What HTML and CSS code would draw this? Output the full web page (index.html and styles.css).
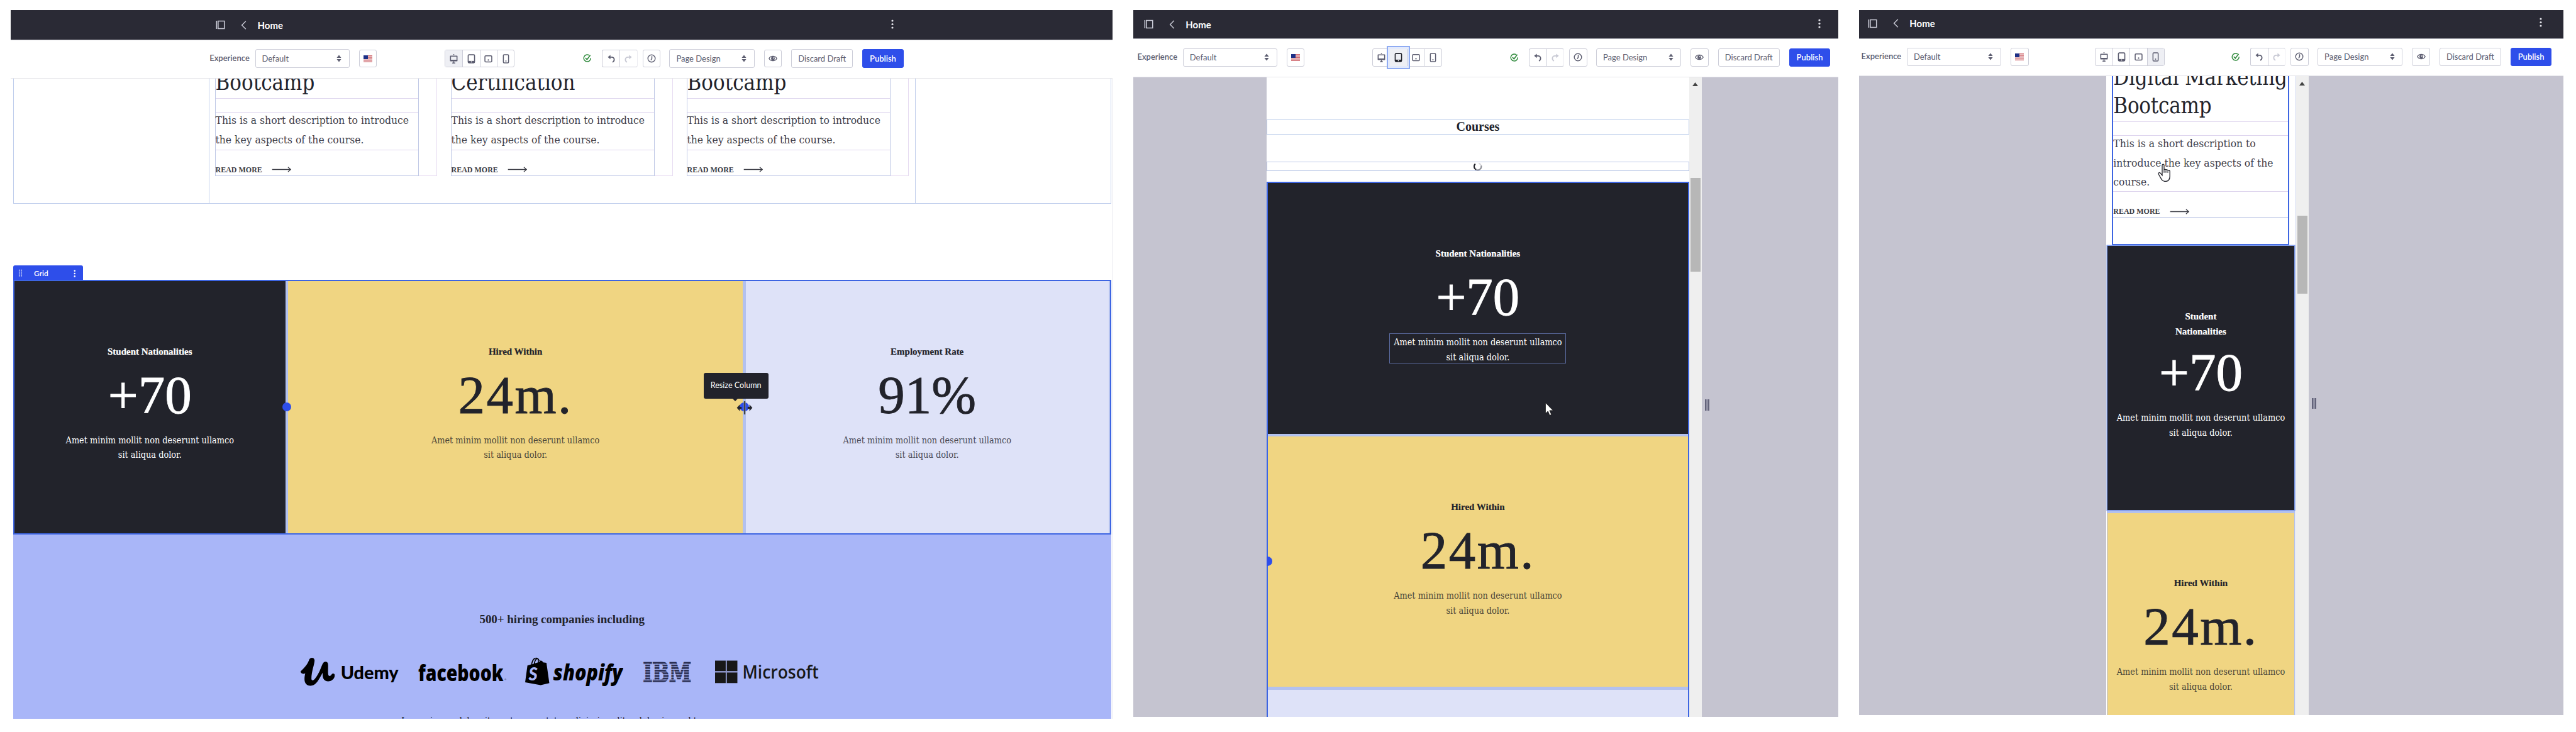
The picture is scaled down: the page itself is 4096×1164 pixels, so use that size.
FILE: index.html
```
<!DOCTYPE html>
<html lang="en">
<head>
<meta charset="utf-8">
<title>Home - Page Editor</title>
<link rel="stylesheet" href="styles.css">
</head>
<body>
<svg class="sprite" aria-hidden="true">
  <symbol id="i-panel" viewBox="0 0 16 16"><path d="M1.2 1v14M3.8 1.6h10.6v12.8H3.8z" fill="none" stroke="currentColor" stroke-width="1.7"/></symbol>
  <symbol id="i-back" viewBox="0 0 9 14"><path d="M7.8.8 1.6 7l6.2 6.2" fill="none" stroke="currentColor" stroke-width="1.4"/></symbol>
  <symbol id="i-dots" viewBox="0 0 4 15"><circle cx="2" cy="2" r="1.6"/><circle cx="2" cy="7.5" r="1.6"/><circle cx="2" cy="13" r="1.6"/></symbol>
  <symbol id="i-updown" viewBox="0 0 8 12"><path d="M4 .5 7.6 5H.4zM4 11.5.4 7h7.2z"/></symbol>
  <symbol id="i-flag" viewBox="0 0 14 11"><path fill="#f3dede" d="M0 0h14v11H0z"/><path fill="#d0686f" d="M0 0h14v1.3H0zM0 2.5h14v1.2H0zM0 5h14v1.2H0zM0 7.4h14v1.2H0zM0 9.8h14V11H0z"/><path fill="#1d2f86" d="M0 0h7v6H0z"/></symbol>
  <symbol id="i-desktop" viewBox="0 0 16 18"><path d="M2.5 4.5h11v8h-11zM2 11.4h12" fill="none" stroke="currentColor" stroke-width="1.7" stroke-linejoin="round"/><path d="M5.5 15.5h5v1.6h-5zM7.2 13h1.6v3H7.2zM7.2 1h1.6v1.6H7.2z"/></symbol>
  <symbol id="i-tablet" viewBox="0 0 16 18"><rect x="2.6" y="2.2" width="10.8" height="13.6" rx="1.4" fill="none" stroke="currentColor" stroke-width="1.7"/><path d="M2.6 12.6h10.8v3H2.6z"/><circle cx="8" cy="14.2" r=".9" fill="#fff"/></symbol>
  <symbol id="i-tabland" viewBox="0 0 16 18"><rect x="2.2" y="3.9" width="11.6" height="10.4" rx="1.4" fill="none" stroke="currentColor" stroke-width="1.6"/><circle cx="8" cy="11" r="1.2"/></symbol>
  <symbol id="i-phone" viewBox="0 0 16 18"><rect x="3.6" y="2" width="8.8" height="14" rx="1.4" fill="none" stroke="currentColor" stroke-width="1.6"/><circle cx="8" cy="12.8" r="1.1"/></symbol>
  <symbol id="i-check" viewBox="0 0 14 14"><path d="M10.2 2A5.7 5.7 0 1 0 12.7 6.5" fill="none" stroke="currentColor" stroke-width="1.5"/><path d="M4 6.2 6.6 9 12 1.8" fill="none" stroke="currentColor" stroke-width="1.7"/></symbol>
  <symbol id="i-undo" viewBox="0 0 14 14"><path d="M5.6 1.4v6.8L1.4 4.8z"/><path d="M4 4.8h3.6a4 4 0 0 1 4 4c0 1.800-1 3.400-2.600 4" fill="none" stroke="currentColor" stroke-width="1.8"/></symbol>
  <symbol id="i-redo" viewBox="0 0 14 14"><path d="M8.400 1.400v6.800l4.200-3.400z"/><path d="M10 4.800H6.400a4 4 0 0 0-4 4c0 1.800 1 3.400 2.600 4" fill="none" stroke="currentColor" stroke-width="1.800"/></symbol>
  <symbol id="i-clock" viewBox="0 0 14 14"><circle cx="7" cy="7" r="5.800" fill="none" stroke="currentColor" stroke-width="1.400"/><path d="M7.500 3.200V7L6 9.600" fill="none" stroke="currentColor" stroke-width="1.500"/></symbol>
  <symbol id="i-eye" viewBox="0 0 14 10"><path d="M.8 5C3.500.2 10.500.2 13.200 5 10.500 9.800 3.500 9.800.8 5z" fill="none" stroke="currentColor" stroke-width="1.400"/><circle cx="7" cy="5" r="2.900"/><circle cx="7.800" cy="4.200" r=".9" fill="#fff"/></symbol>
  <symbol id="i-arrow" viewBox="0 0 34 10"><path d="M0 5h32M28 .8 32.800 5 28 9.200" fill="none" stroke="currentColor" stroke-width="1.400"/></symbol>
</svg>

<main class="board">
  <section class="editor editor-desktop">
    <header class="topbar">
      <svg class="ic-panel"><use href="#i-panel"/></svg>
      <svg class="ic-back"><use href="#i-back"/></svg>
      <span class="page-name">Home</span>
      <svg class="ic-dots"><use href="#i-dots"/></svg>
    </header>
    <div class="toolbar">
      <div class="tools">
        <span class="tool-label">Experience</span>
        <span class="select select-exp">Default<svg><use href="#i-updown"/></svg></span>
        <span class="btn-icon flag"><svg><use href="#i-flag"/></svg></span>
      </div>
      <div class="group">
        <span class="active"><svg><use href="#i-desktop"/></svg></span><span><svg><use href="#i-tablet"/></svg></span><span><svg><use href="#i-tabland"/></svg></span><span><svg><use href="#i-phone"/></svg></span>
      </div>
      <div class="tools">
        <svg class="ic-check"><use href="#i-check"/></svg>
        <div class="group history"><span><svg><use href="#i-undo"/></svg></span><span class="off"><svg><use href="#i-redo"/></svg></span></div>
        <span class="btn-icon clock"><svg><use href="#i-clock"/></svg></span>
        <span class="select select-mode">Page Design<svg><use href="#i-updown"/></svg></span>
        <span class="btn-icon eye"><svg><use href="#i-eye"/></svg></span>
        <span class="btn">Discard Draft</span>
        <span class="btn btn-primary">Publish</span>
      </div>
    </div>
    <div class="page page-desktop">
      <div class="courses">
        <div class="container">
          <article class="card"><div class="card-body">
            <h2>Bootcamp</h2>
            <p><span>This is a short description to introduce<br>the key aspects of the course.</span></p>
            <a>READ MORE<svg><use href="#i-arrow"/></svg></a>
          </div></article>
          <article class="card"><div class="card-body">
            <h2>Certification</h2>
            <p><span>This is a short description to introduce<br>the key aspects of the course.</span></p>
            <a>READ MORE<svg><use href="#i-arrow"/></svg></a>
          </div></article>
          <article class="card"><div class="card-body">
            <h2>Bootcamp</h2>
            <p><span>This is a short description to introduce<br>the key aspects of the course.</span></p>
            <a>READ MORE<svg><use href="#i-arrow"/></svg></a>
          </div></article>
        </div>
      </div>
      <div class="grid-label">
        <svg class="drag" viewBox="0 0 8 14"><path d="M1 1h2v2H1zM5 1h2v2H5zM1 4.500h2v2H1zM5 4.500h2v2H5zM1 8h2v2H1zM5 8h2v2H5zM1 11.500h2v2H1zM5 11.500h2v2H5z"/></svg>
        <span>Grid</span>
        <svg class="more"><use href="#i-dots"/></svg>
      </div>
      <div class="stats-row">
        <div class="stat dark"><h3>Student Nationalities</h3><b>+70</b><p>Amet minim mollit non deserunt ullamco<br>sit aliqua dolor.</p><i class="knob"></i></div>
        <div class="stat yellow"><h3>Hired Within</h3><b class="wide">24m.</b><p>Amet minim mollit non deserunt ullamco<br>sit aliqua dolor.</p><i class="knob"></i>
          <div class="tooltip">Resize Column</div>
          <svg class="resize" viewBox="0 0 26 22"><path d="M11.500 0h3v22h-3z" fill="#8d8f86"/><path d="M12.300 0h1.500v22h-1.500z" fill="#22232b"/><path d="M0 11 5 5.500v3.800H8v3.400H5v3.800zM26 11 21 5.500v3.800H18v3.400h3v3.800z" fill="#22232b"/></svg>
        </div>
        <div class="stat lavender"><h3>Employment Rate</h3><b>91%</b><p>Amet minim mollit non deserunt ullamco<br>sit aliqua dolor.</p></div>
      </div>
      <div class="companies">
        <h4>500+ hiring companies including</h4>
        <div class="logos">
          <svg class="udemy" viewBox="19 54.600 681 218.300"><path d="M19 162C48 136 68 112 80 78c6-16 36-15 36 8 0 24-22 78-22 126 0 16 12 16 24 2 20-24 36-58 50-96 6-16 14-23 24-23 14 0 18 10 18 26 0 30-2 52 2 66 4 13 16 6 24-6 6-8 20-6 20 8 0 24-20 42-46 42-24 0-38-16-38-44v-16c-22 40-44 91-84 91-28 0-42-20-42-46 0-14 2-28 5-40-8 4-16 4-24 0-6-4-8-9-8-14z"/><text x="297" y="215" font-family="Lato" font-weight="900" font-size="122" textLength="402" lengthAdjust="spacingAndGlyphs">Udemy</text></svg>
          <svg class="facebook" viewBox="834 54.600 616 218.300"><text x="834" y="228" font-family="Open Sans" font-weight="800" font-size="156" textLength="592" lengthAdjust="spacingAndGlyphs">facebook</text><circle cx="1440" cy="217" r="6" fill="#7f89bd"/></svg>
          <svg class="shopify" viewBox="48 54.600 678 218.300"><path d="M64 121 90 114C94 84 108 67 124 67c12 0 20 8 26 22 10-4 18 0 22 10l24 4 20 141-60 14-108-20z"/><path d="M97 112C102 88 112 75 124 73c-8 8-14 20-16 36zM116 106c2-14 8-26 16-31 4 6 6 14 6 24zM144 97c0-5-1-8-2-12 4 2 6 5 8 10z" fill="#a9b6f8"/><text x="72" y="226" font-family="Lato" font-style="italic" font-weight="900" font-size="126" fill="#a9b6f8" textLength="62" lengthAdjust="spacingAndGlyphs">S</text><text x="243" y="226" font-family="Open Sans" font-style="italic" font-weight="800" font-size="152" textLength="482" lengthAdjust="spacingAndGlyphs">shopify</text></svg>
          <svg class="ibm" viewBox="862 54.600 338 218.300"><defs><pattern id="bars" patternUnits="userSpaceOnUse" x="0" y="96.500" width="20" height="18.200"><path fill="#2b2f52" d="M0 0h20v12.500H0z"/></pattern></defs><text x="864" y="234" font-family="DejaVu Serif" font-weight="700" font-size="186" fill="url(#bars)" stroke="url(#bars)" stroke-width="9" textLength="334" lengthAdjust="spacingAndGlyphs">IBM</text></svg>
          <svg class="microsoft" viewBox="1366 54.600 720 218.300"><path fill="#181818" d="M1366 87h74v74h-74zM1447 87h74v74h-74zM1366 169h74v74h-74zM1447 169h74v74h-74z"/><path fill="#8b93c4" d="M1440 87h7v156h-7zM1366 161h155v8h-155z"/><text x="1556" y="213" font-family="Open Sans" font-weight="600" fill="#181818" font-size="126" textLength="530" lengthAdjust="spacingAndGlyphs">Microsoft</text></svg>
        </div>
        <p>Lorem ipsum dolor sit amet, consectetur adipiscing elit sed do eiusmod tempor</p>
      </div>
    </div>
  </section>

  <section class="editor editor-tablet">
    <header class="topbar">
      <svg class="ic-panel"><use href="#i-panel"/></svg>
      <svg class="ic-back"><use href="#i-back"/></svg>
      <span class="page-name">Home</span>
      <svg class="ic-dots"><use href="#i-dots"/></svg>
    </header>
    <div class="toolbar">
      <div class="tools">
        <span class="tool-label">Experience</span>
        <span class="select select-exp">Default<svg><use href="#i-updown"/></svg></span>
        <span class="btn-icon flag"><svg><use href="#i-flag"/></svg></span>
      </div>
      <div class="group">
        <span><svg><use href="#i-desktop"/></svg></span><span class="active focus"><svg><use href="#i-tablet"/></svg></span><span><svg><use href="#i-tabland"/></svg></span><span><svg><use href="#i-phone"/></svg></span>
      </div>
      <div class="tools">
        <svg class="ic-check"><use href="#i-check"/></svg>
        <div class="group history"><span><svg><use href="#i-undo"/></svg></span><span class="off"><svg><use href="#i-redo"/></svg></span></div>
        <span class="btn-icon clock"><svg><use href="#i-clock"/></svg></span>
        <span class="select select-mode">Page Design<svg><use href="#i-updown"/></svg></span>
        <span class="btn-icon eye"><svg><use href="#i-eye"/></svg></span>
        <span class="btn">Discard Draft</span>
        <span class="btn btn-primary">Publish</span>
      </div>
    </div>
    <div class="stage">
      <div class="page page-tablet">
        <h4 class="section-title">Courses</h4>
        <div class="loading"><svg viewBox="0 0 16 16"><path d="M3.200 3A6.300 6.300 0 0 0 5 13.500" fill="none" stroke="#22232b" stroke-width="2.400"/><path d="M5 13.500A6.300 6.300 0 0 0 13.800 6" fill="none" stroke="#8c8d95" stroke-width="2.400"/><path d="M13.800 6A6.300 6.300 0 0 0 9.500 2" fill="none" stroke="#d8d8dd" stroke-width="2.400"/></svg></div>
        <div class="stats-col">
          <div class="stat dark"><h3>Student Nationalities</h3><b>+70</b><p class="outlined">Amet minim mollit non deserunt ullamco<br>sit aliqua dolor.</p></div>
          <div class="stat yellow"><h3>Hired Within</h3><b class="wide">24m.</b><p>Amet minim mollit non deserunt ullamco<br>sit aliqua dolor.</p><i class="knob"></i></div>
          <div class="stat lavender"></div>
        </div>
        <svg class="cursor" viewBox="0 0 13 21"><path d="M.5.500v17l3.800-3.700 2.900 6.600 2.600-1.200-2.900-6.400h5.500z" fill="#fff" stroke="#000" stroke-width=".6"/></svg>
      </div>
      <div class="scrollbar"><svg viewBox="0 0 9 6"><path d="M4.500 0 9 6H0z"/></svg><i></i></div>
      <div class="handle"></div>
    </div>
  </section>

  <section class="editor editor-phone">
    <header class="topbar">
      <svg class="ic-panel"><use href="#i-panel"/></svg>
      <svg class="ic-back"><use href="#i-back"/></svg>
      <span class="page-name">Home</span>
      <svg class="ic-dots"><use href="#i-dots"/></svg>
    </header>
    <div class="toolbar">
      <div class="tools">
        <span class="tool-label">Experience</span>
        <span class="select select-exp">Default<svg><use href="#i-updown"/></svg></span>
        <span class="btn-icon flag"><svg><use href="#i-flag"/></svg></span>
      </div>
      <div class="group">
        <span><svg><use href="#i-desktop"/></svg></span><span><svg><use href="#i-tablet"/></svg></span><span><svg><use href="#i-tabland"/></svg></span><span class="active"><svg><use href="#i-phone"/></svg></span>
      </div>
      <div class="tools">
        <svg class="ic-check"><use href="#i-check"/></svg>
        <div class="group history"><span><svg><use href="#i-undo"/></svg></span><span class="off"><svg><use href="#i-redo"/></svg></span></div>
        <span class="btn-icon clock"><svg><use href="#i-clock"/></svg></span>
        <span class="select select-mode">Page Design<svg><use href="#i-updown"/></svg></span>
        <span class="btn-icon eye"><svg><use href="#i-eye"/></svg></span>
        <span class="btn">Discard Draft</span>
        <span class="btn btn-primary">Publish</span>
      </div>
    </div>
    <div class="stage">
      <div class="page page-phone">
        <article class="card selected"><div class="card-body">
          <h2>Digital Marketing<br>Bootcamp</h2>
          <p><span>This is a short description to<br>introduce the key aspects of the<br>course.</span></p>
          <a>READ MORE<svg><use href="#i-arrow"/></svg></a>
        </div></article>
        <div class="stats-col">
          <div class="stat dark"><h3>Student<br>Nationalities</h3><b>+70</b><p>Amet minim mollit non deserunt ullamco<br>sit aliqua dolor.</p></div>
          <div class="stat yellow"><h3>Hired Within</h3><b class="wide">24m.</b><p>Amet minim mollit non deserunt ullamco<br>sit aliqua dolor.</p></div>
        </div>
        <svg class="hand" viewBox="0 0 21 29"><path d="M7 14.500V2.600C7 .4 10 .4 10 2.600V10c.3-1.600 3-1.400 3 .4.500-1.400 3-1.200 3 .8.600-1.200 3.200-1 3.200 1V20c0 5-2.400 8.200-7.200 8.200-3.400 0-5.400-1.600-6.800-4.600L1.400 17c-1.200-2.400 1.200-3.600 2.800-1.900L7 18.500z" fill="#fff" stroke="#22232b" stroke-width="1.300"/><path d="M10 10v4.500M13 11v3.500M16 12v2.500" stroke="#22232b" stroke-width="1.200"/></svg>
      </div>
      <div class="scrollbar"><svg viewBox="0 0 9 6"><path d="M4.500 0 9 6H0z"/></svg><i></i></div>
      <div class="handle"></div>
    </div>
  </section>
</main>
</body>
</html>
```
FILE: styles.css
```
* { box-sizing: border-box; }
body { margin: 0; background: #fff; overflow: hidden; font-family: Lato, "Noto Sans", sans-serif; }
h2, h3, h4, p { margin: 0; font-weight: 400; }
svg { display: block; flex: none; fill: currentColor; }
.sprite { position: absolute; width: 0; height: 0; }

.board { display: flex; align-items: flex-start; height: 1164px; padding: 16px 0 0 16.5px; }
.editor { display: flex; flex-direction: column; flex: none; }
.editor-desktop { width: 1752.5px; }
.editor-tablet { width: 1121px; margin-left: 32.8px; }
.editor-phone { width: 1120px; margin-left: 33px; }

/* dark header */
.topbar { display: flex; align-items: center; flex: none; height: 48px; background: #2a2a35; color: #c9cad6; border-bottom: 1px solid #b3b4bd; padding: 0 27.500px 0 17px; }
.editor-tablet .topbar { height: 46px; }
.editor-phone .topbar { height: 45.500px; padding: 0 34px 2px 14px; }
.editor-desktop .topbar { padding: 0 348px 0 326.500px; }
.ic-panel { width: 15.500px; height: 15px; }
.ic-back { width: 9px; height: 14px; margin: 0 17.500px 0 24.500px; }
.page-name { color: #fff; font-size: 15px; font-weight: 700; line-height: 20px; }
.ic-dots { width: 4px; height: 15px; margin: -3px 0 0 auto; color: #e3e3ea; }

/* toolbar */
.toolbar { display: flex; align-items: center; justify-content: space-between; flex: none; height: 60.500px; border-bottom: 1.500px solid #e4e4e9; padding: 0 12.600px 1px 6.700px; color: #5c5d70; font-size: 13px; background: #fff; }
.editor-desktop .toolbar { padding: 0 332.400px 1.500px 316.700px; }
.editor-phone .toolbar { height: 59.500px; padding: 0 18.500px 1px 3.800px; }
.tools { display: flex; align-items: center; }
.toolbar > .tools:first-child { width: 266px; }
.toolbar > .group { margin-right: 1px; }
.tool-label { width: 64.500px; font-weight: 600; padding-bottom: 2px; }
.select { display: flex; align-items: center; justify-content: space-between; height: 29.500px; border: 1.500px solid #cdced9; border-radius: 3px; padding: 0 11.500px 0 10px; }
.select svg { width: 8px; height: 12px; }
.select-exp { width: 150.400px; margin-left: 8px; }
.select-mode { width: 135.300px; margin-left: 14.500px; }
.btn-icon { display: flex; align-items: center; justify-content: center; width: 28.300px; height: 28.500px; border: 1.500px solid #cdced9; border-radius: 3px; }
.btn-icon svg { width: 14px; height: 14px; }
.btn-icon.flag { margin-left: 15.400px; }
.btn-icon.flag svg { height: 11px; }
.btn-icon.clock { margin-left: 8px; }
.btn-icon.eye { margin-left: 15px; }
.btn-icon.eye svg { height: 10px; }
.btn { display: flex; align-items: center; justify-content: center; width: 98.300px; height: 29.500px; margin-left: 15px; border: 1.500px solid #cdced9; border-radius: 3px; }
.btn-primary { width: 65.300px; border-color: #2e4eea; background: #2e4eea; color: #fff; font-weight: 600; }
.group { display: flex; height: 28.500px; border: 1.500px solid #cdced9; border-radius: 3px; }
.group span { display: flex; align-items: center; justify-content: center; width: 27.300px; }
.group span + span { border-left: 1.200px solid #cdced9; }
.group svg { width: 15px; height: 17px; }
.group .active { background: #eeeff4; }
.group .focus { color: #22232b; outline: 2.500px solid #8fabf2; outline-offset: 3px; box-shadow: 0 0 0 3px #e3eafc; border-left: 0; }
.history { margin-left: 16.300px; border-right-color: #ededf2; }
.history svg { width: 14px; height: 14px; }
.history .off { color: #c8c9d4; }
.ic-check { width: 13.500px; height: 13.500px; color: #2f8a3c; }

/* course cards */
h2, .card p, .stat p, .companies p { font-family: "DejaVu Serif Condensed", "DejaVu Serif", serif; }
h3, h4, b, .card a { font-family: "Liberation Serif", serif; }
.courses { height: 199px; border: 1.500px solid #bfcdec; border-top: 0; overflow: hidden; }
.container { display: flex; width: 1124.500px; height: 198px; margin-left: 309.500px; padding-left: 9px; border: solid #c3cfec; border-width: 0 1.500px; }
.card { width: 353px; height: 170.500px; margin: -16px 22px 0 0; flex: none; border: solid #e6dbf1; border-width: 0 1.500px 1.500px 0; }
.container .card { height: 171px; }
.card-body { width: 324px; height: 171px; border: 1.500px solid #bfc8e6; border-top: 0; }
h2 { height: 48.200px; font-size: 34.500px; line-height: 45.700px; color: #22232b; border-bottom: 1.500px solid #ded5ee; white-space: nowrap; }
.card p { height: 60.500px; margin-top: 21.700px; border: solid #ded5ee; border-width: 1.500px 0; font-size: 17.350px; line-height: 30.200px; color: #3f404a; white-space: nowrap; }
.card p span { display: block; margin-top: -3px; }
.card a { display: flex; align-items: center; gap: 14.500px; height: 16px; margin-top: 23px; font-size: 12px; font-weight: 700; line-height: 16px; color: #3b3c45; }
.card a svg { width: 34px; height: 9px; }

/* stats */
.grid-label { display: flex; align-items: center; width: 111px; height: 24.500px; margin-top: 98.500px; padding: 0 11px 0 8px; border-radius: 3px 3px 0 0; background: #2e4eea; color: #fff; font-size: 12px; font-weight: 600; }
.drag { width: 7px; height: 12px; margin-right: 18px; opacity: .8; }
.grid-label .more { width: 3.500px; height: 12px; margin: 1px 1px 0 auto; }
.stats-row { display: grid; grid-template-columns: 430.600px 723.300px 577px; gap: 4.400px; height: 404.500px; margin-top: -1.500px; border: 2.600px solid #3d65e2; background: #b3c1ee; }
.stat { position: relative; padding-top: 99.500px; text-align: center; }
.dark { background: #22232b; color: #fff; }
.yellow { background: #f0d582; color: #22232b; }
.lavender { background: #dee2f8; color: #22232b; }
h3 { font-size: 15px; line-height: 24px; font-weight: 700; -webkit-text-stroke: .2px currentColor; }
b { display: block; margin-top: 15px; font-size: 85px; line-height: 84px; font-weight: 400; -webkit-text-stroke: .9px currentColor; }
b.wide { letter-spacing: 2.500px; }
.stat p { width: 281px; margin: 16px auto 0; padding: 2px 0 0; border: 1.500px solid transparent; font-size: 14.350px; line-height: 23.800px; white-space: nowrap; }
.yellow p { color: #4b4638; }
.lavender p { color: #4a4b57; }
.stat p.outlined { border-color: #5a6a9f; height: 48.500px; }
.knob { position: absolute; z-index: 1; right: -9.500px; top: 192.500px; width: 14.600px; height: 14.600px; border-radius: 50%; background: #2e4eea; }
.tooltip { position: absolute; z-index: 2; left: 660.700px; top: 146px; width: 103px; height: 40.500px; border-radius: 3px; background: #22232b; color: #fff; font-size: 12.600px; line-height: 39px; text-align: center; }
.tooltip::after { content: ""; position: absolute; left: 45px; top: 40px; border: 5px solid transparent; border-top-color: #22232b; border-bottom: 0; }
.resize { position: absolute; z-index: 2; right: -15.500px; top: 191px; width: 26px; height: 21px; }

.page-desktop { height: 1018.500px; padding: 0 1.500px 0 4.500px; border-right: 1.200px solid #ececf0; overflow: hidden; }
.companies { height: 300px; padding-top: 121.600px; background: #a9b6f8; text-align: center; color: #22232b; }
.companies h4 { font-size: 19px; line-height: 28px; font-weight: 700; letter-spacing: -.07px; }
.logos { display: flex; height: 50px; margin-top: 43.500px; padding-left: 457.400px; color: #000; }
.logos svg { height: 50px; }
.udemy { width: 155.900px; }
.facebook { width: 141px; margin-left: 30.700px; }
.shopify { width: 155.200px; margin-left: 29.400px; }
.ibm { width: 77.500px; margin-left: 31.200px; }
.microsoft { width: 164.800px; margin-left: 37.900px; }
.companies p { margin-top: 41.500px; font-size: 14.100px; line-height: 24px; }

/* framed preview */
.stage { display: flex; background: #c5c4d0; overflow: hidden; }
.editor-tablet .stage { height: 1017px; padding-left: 212.300px; }
.editor-phone .stage { height: 1015.500px; padding-left: 392.900px; }
.page { position: relative; background: #fff; flex: none; }
.page-tablet { width: 671.600px; overflow: hidden; }
.section-title { height: 24.500px; margin-top: 67.200px; border: 1.500px solid #bccdea; font-size: 20px; line-height: 21px; font-weight: 700; text-align: center; color: #22232b; }
.loading { display: flex; justify-content: center; height: 15px; margin-top: 43.300px; border: 1.500px solid #b7c5e6; }
.loading svg { width: 14px; height: 14px; margin-top: -.500px; }
.page-tablet .stats-col { display: grid; grid-template-rows: 398.100px 397.300px 44px; gap: 4.900px; margin-top: 17px; border: 2.600px solid #3d65e2; border-bottom: 0; background: #b3c1ee; }
.page-tablet .knob { right: auto; left: -8px; top: 191px; }
.scrollbar { width: 20.600px; flex: none; padding-top: 8.500px; background: #efefef; color: #444; }
.scrollbar svg { width: 9px; height: 6px; margin: 0 auto; }
.scrollbar i { display: block; width: 15.500px; height: 149px; margin: 145.500px auto 0; background: #b7b7b7; }
.handle { width: 7px; height: 17.500px; margin: 512.500px 0 0 5px; border: solid #63637a; border-width: 0 2.500px; background: #8f8fa2; }
.cursor { position: absolute; left: 442.600px; top: 517.500px; width: 13px; height: 21px; }

.page-phone { width: 302px; border-right: 1.500px solid #cdd6ee; }
.page-phone .card { width: 281.800px; height: 269px; margin: 0 0 0 9.600px; border: 2px solid #3d65e2; border-top: 0; overflow: hidden; }
.page-phone .card-body { width: auto; height: 245px; border-width: 0 0 1.500px; margin-top: -20.500px; }
.page-phone h2 { height: 93.200px; letter-spacing: -.2px; }
.page-phone .card p { height: 90px; }
.page-phone .stats-col { display: grid; grid-template-rows: 419.700px 321px; gap: 5px; width: 299.500px; margin-left: 1px; margin-top: 1.200px; background: #b3c1ee; padding: 0 1.500px; }
.page-phone .dark { box-shadow: 0 0 0 1.500px #7f9bea; }
.page-phone .stat p { width: auto; }
.page-phone .dark b { margin-top: 11.500px; }
.editor-phone .scrollbar i { height: 124.500px; margin-top: 207px; margin-right: 2.500px; }
.editor-phone .handle { margin-top: 511.500px; }
.hand { position: absolute; left: 81.900px; top: 138.500px; width: 21px; height: 29.500px; }
```
